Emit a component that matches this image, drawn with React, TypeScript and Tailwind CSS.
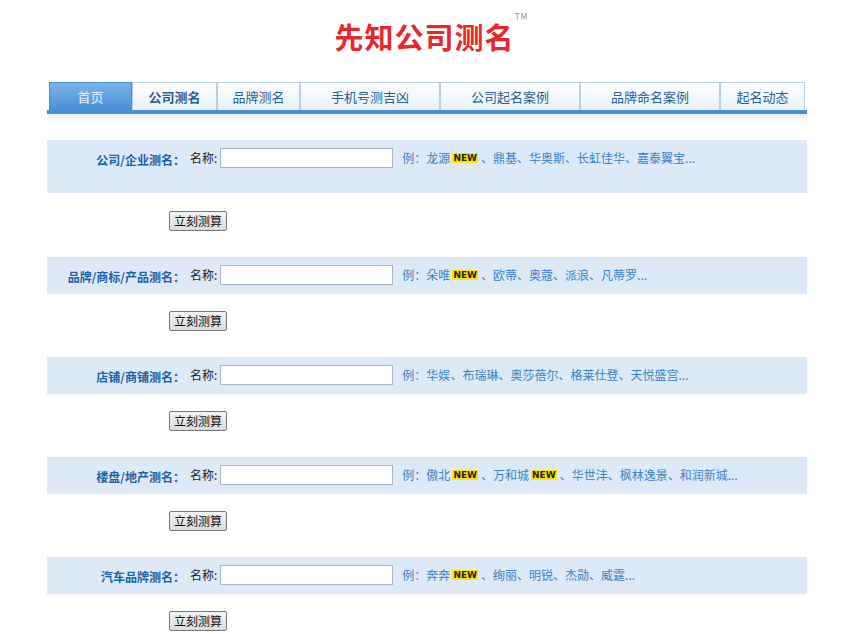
import React from "react";

const tabs = [
  { t: "首页", w: 83, active: true },
  { t: "公司测名", w: 85, bold: true },
  { t: "品牌测名", w: 83 },
  { t: "手机号测吉凶", w: 140 },
  { t: "公司起名案例", w: 140 },
  { t: "品牌命名案例", w: 140 },
  { t: "起名动态", w: 85 },
];

const New = () => (
  <span className="inline-block bg-[#ffe400] text-[#222] text-[9px] leading-[10px] px-[1px] mx-[2px] font-bold" style={{ fontFamily: "'DejaVu Sans',sans-serif" }}>NEW</span>
);

type Item = { n: string; isNew?: boolean };
const sections: { label: string; items: Item[]; tall?: boolean }[] = [
  { label: "公司/企业测名：", tall: true, items: [{ n: "龙源", isNew: true }, { n: "鼎基" }, { n: "华奥斯" }, { n: "长虹佳华" }, { n: "嘉泰翼宝..." }] },
  { label: "品牌/商标/产品测名：", items: [{ n: "朵唯", isNew: true }, { n: "欧蒂" }, { n: "奥蔻" }, { n: "派浪" }, { n: "凡蒂罗..." }] },
  { label: "店铺/商铺测名：", items: [{ n: "华娱" }, { n: "布瑞琳" }, { n: "奥莎蓓尔" }, { n: "格莱仕登" }, { n: "天悦盛宫..." }] },
  { label: "楼盘/地产测名：", items: [{ n: "傲北", isNew: true }, { n: "万和城", isNew: true }, { n: "华世沣" }, { n: "枫林逸景" }, { n: "和润新城..." }] },
  { label: "汽车品牌测名：", items: [{ n: "奔奔", isNew: true }, { n: "绚丽" }, { n: "明锐" }, { n: "杰勋" }, { n: "威霆..." }] },
];

export default function App() {
  return (
    <div className="w-[849px] h-[634px] bg-white overflow-hidden" style={{ fontFamily: "'Noto Sans CJK SC',sans-serif" }}>
      <div className="h-[82px] flex justify-center pt-[16px]">
        <div className="relative text-[#e8262c] text-[29px] font-bold leading-[40px] tracking-[1px]">
          先知公司测名
          <span className="absolute right-[-14px] top-[-2px] text-[8px] leading-none text-[#999] font-normal" style={{ fontFamily: "'DejaVu Sans',sans-serif" }}>TM</span>
        </div>
      </div>
      <div className="ml-[47px] w-[760px]">
        <div className="flex h-[28px] pl-[2px]">
          {tabs.map((t) => (
            <div
              key={t.t}
              style={{ width: t.w }}
              className={`flex items-center justify-center text-[13px] border border-b-0 ${t.active ? "bg-gradient-to-b from-[#79b4e8] to-[#4a90d6] text-[#e8f2fc] border-[#4a8ad0]" : "bg-gradient-to-b from-white to-[#e8f0f8] border-[#b8d0e6] text-[#2b5f93]"} ${t.bold ? "font-bold text-[#1a4f87]" : ""}`}
            >
              {t.t}
            </div>
          ))}
        </div>
        <div className="h-[4px] bg-[#4a90d6]" />
        <div className="h-[12px] bg-gradient-to-b from-[#eaf3fb] to-white" />
        <div className="h-[14px]" />
        {sections.map((s, i) => (
          <div key={i}>
            <div className={`bg-[#dde9f7] flex items-start ${s.tall ? "h-[53px] pt-[8px]" : "h-[37px] pt-[8px]"}`}>
              <div className="w-[138px] text-right text-[12px] font-bold text-[#1a63a8] leading-[20px] pt-[2px]">{s.label}</div>
              <div className="ml-[5px] text-[12px] text-[#222] leading-[20px]">名称:</div>
              <input className="ml-[3px] w-[173px] h-[20px] bg-white border border-[#a8b4c0]" />
              <div className="ml-[9px] text-[12px] text-[#3a83c4] leading-[20px] flex items-center">
                例：
                {s.items.map((it, j) => (
                  <span key={j} className="flex items-center">
                    {it.n}
                    {it.isNew && <New />}
                    {j < s.items.length - 1 && <span className={it.isNew ? "ml-[1px]" : ""}>、</span>}
                  </span>
                ))}
              </div>
            </div>
            <div className={`${i === 0 ? "h-[64px] pt-[14px]" : "h-[63px] pt-[13px]"} pl-[122px]`}>
              <button className="h-[20px] w-[58px] text-[12px] leading-[16px] text-[#111] bg-gradient-to-b from-[#f4f4f4] to-[#dcdcdc] border border-[#777] rounded-[2px]">立刻测算</button>
            </div>
          </div>
        ))}
      </div>
    </div>
  );
}
